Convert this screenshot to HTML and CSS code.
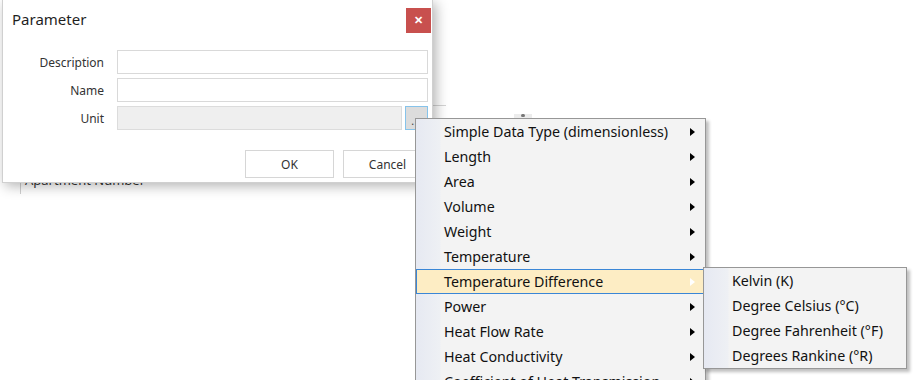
FILE: index.html
```html
<!DOCTYPE html>
<html lang="en">
<head>
    <meta charset="UTF-8">
    <meta name="viewport" content="width=device-width, initial-scale=1.0">
    <title>Parameter</title>
    <link rel="stylesheet" href="styles.css">
</head>
<body>
    <div class="desktop">
        <!-- grid behind the dialog -->
        <div class="backdrop">
            <div class="back-header"></div>
            <div class="back-icon"></div>
            <div class="back-row">Apartment Number</div>
        </div>

        <div class="dialog">
            <div class="dialog-title">
                <span>Parameter</span>
                <button class="close-btn">&#x2715;</button>
            </div>
            <div class="form">
                <label>Description</label>
                <input type="text" class="field">
                <label>Name</label>
                <input type="text" class="field">
                <label>Unit</label>
                <div class="unit-row">
                    <input type="text" class="field readonly" readonly>
                    <button class="pick-btn">.</button>
                </div>
            </div>
            <div class="dialog-buttons">
                <button class="btn">OK</button>
                <button class="btn">Cancel</button>
            </div>
        </div>

        <ul class="menu main-menu">
            <li>Simple Data Type (dimensionless)</li>
            <li>Length</li>
            <li>Area</li>
            <li>Volume</li>
            <li>Weight</li>
            <li>Temperature</li>
            <li class="active">Temperature Difference</li>
            <li>Power</li>
            <li>Heat Flow Rate</li>
            <li>Heat Conductivity</li>
            <li>Coefficient of Heat Transmission</li>
        </ul>

        <ul class="menu sub-menu">
            <li>Kelvin (K)</li>
            <li>Degree Celsius (°C)</li>
            <li>Degree Fahrenheit (°F)</li>
            <li>Degrees Rankine (°R)</li>
        </ul>
    </div>
</body>
</html>
```

FILE: styles.css
```css
body {
    margin: 0;
    background: #fff;
    font-family: "Noto Sans", "Open Sans", sans-serif;
    color: #222;
}

.desktop {
    position: relative;
    width: 917px;
    height: 380px;
    overflow: hidden;
}

/* stuff behind the dialog */
.backdrop {
    position: absolute;
    left: 0;
    top: 0;
    width: 917px;
    height: 380px;
}

.back-header {
    position: absolute;
    left: 430px;
    top: 105px;
    width: 16px;
    border-top: 1px solid #d4d4d4;
}

.back-icon {
    position: absolute;
    left: 514px;
    top: 114px;
    width: 18px;
    height: 6px;
    background: #ececec;
}

.back-icon::after {
    content: "";
    position: absolute;
    left: 7px;
    top: 0;
    width: 4px;
    height: 3px;
    border-radius: 2px;
    background: #777;
}

.back-row {
    position: absolute;
    left: 20px;
    top: 170px;
    height: 24px;
    padding-left: 4px;
    border-left: 1px solid #cfcfcf;
    font-size: 13px;
    line-height: 20px;
    color: #333;
}

/* dialog */
.dialog {
    position: absolute;
    left: 2px;
    top: 0;
    width: 429px;
    height: 182px;
    background: #fff;
    border: 1px solid #d0d0d0;
    border-top: none;
    box-shadow: 3px 3px 12px rgba(0, 0, 0, 0.3);
}

.dialog-title {
    display: flex;
    justify-content: space-between;
    align-items: center;
    height: 38px;
    padding: 0 1px 0 9px;
    font-size: 15px;
    color: #1f1f1f;
}

.close-btn {
    width: 25px;
    height: 25px;
    margin-top: 3px;
    border: none;
    background: #c8504e;
    color: #fff;
    font-size: 11px;
    font-weight: bold;
    padding: 0;
}

.form {
    display: grid;
    grid-template-columns: 101px 311px;
    column-gap: 13px;
    row-gap: 4px;
    align-items: center;
    margin-top: 12px;
    font-size: 12px;
    color: #333;
}

.form label {
    text-align: right;
}

.field {
    height: 24px;
    box-sizing: border-box;
    border: 1px solid #d9d9d9;
    background: #fff;
    margin: 0;
    outline: none;
}

.unit-row {
    display: flex;
    gap: 3px;
}

.unit-row .field {
    flex: 1;
}

.readonly {
    background: #efefef;
    border-color: #dcdcdc;
}

.pick-btn {
    width: 23px;
    height: 24px;
    box-sizing: border-box;
    border: 1px solid #86c3ea;
    background: #dcdcdc;
    padding: 6px 0 0 0;
    font-size: 12px;
    line-height: 14px;
    color: #444;
    text-align: left;
    text-indent: 5px;
}

.dialog-buttons {
    display: flex;
    gap: 9px;
    justify-content: flex-end;
    margin-top: 20px;
}

.btn {
    width: 89px;
    height: 28px;
    border: 1px solid #d6d6d6;
    background: #fff;
    font-family: inherit;
    font-size: 12px;
    color: #333;
}

/* popup menus */
.menu {
    position: absolute;
    margin: 0;
    padding: 0;
    list-style: none;
    background: linear-gradient(to right, #e6e9f2 0, #eef0f4 24px, #f3f3f3 25px);
    border: 1px solid #979797;
    box-shadow: 3px 3px 3px rgba(0, 0, 0, 0.25);
    font-size: 14.25px;
    color: #111;
}

.menu li {
    position: relative;
    height: 24px;
    padding-top: 1px;
    line-height: 24px;
    padding-left: 28px;
    white-space: nowrap;
}

.main-menu {
    left: 415px;
    top: 118px;
    width: 289px;
    height: 290px;
}

.main-menu li::after {
    content: "";
    position: absolute;
    right: 10px;
    top: 9px;
    border-left: 5px solid #000;
    border-top: 4.5px solid transparent;
    border-bottom: 4.5px solid transparent;
}

.main-menu li.active {
    margin-right: 1px;
    background: #fdedc4;
    outline: 1px solid #3a86d6;
    outline-offset: -1px;
}

.main-menu li.active::after {
    right: 9px;
    border-left-color: #fff;
}

.sub-menu {
    left: 703px;
    top: 267px;
    width: 202px;
}
```
